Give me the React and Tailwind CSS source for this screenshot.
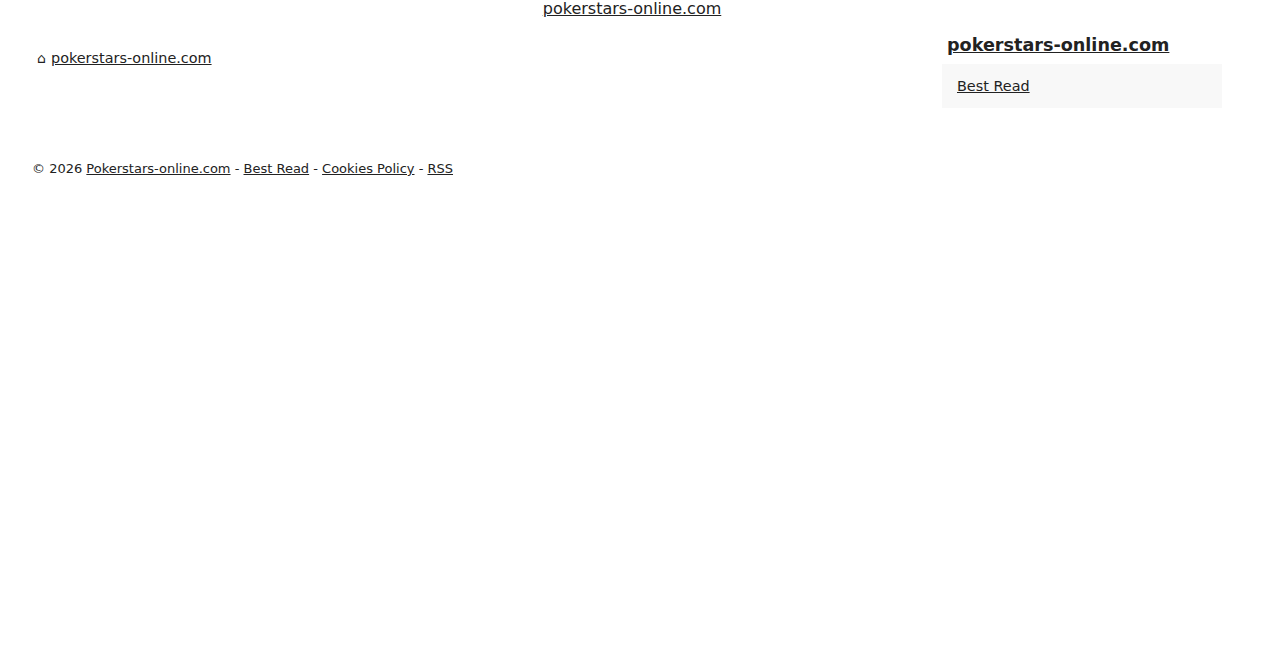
import React from 'react';

const font = { fontFamily: '"DejaVu Sans", Verdana, sans-serif' };

const Link = ({ children, className = '' }) => (
  <a href="#" className={`text-[#222] underline ${className}`}>
    {children}
  </a>
);

export default function App() {
  return (
    <div className="min-h-screen bg-white text-[#222]" style={font}>
      {/* site title */}
      <div className="text-center text-[16px] leading-[17px]">
        <Link>pokerstars-online.com</Link>
      </div>

      <div className="flex pl-[32px] pr-[42px] pt-[14px]">
        {/* main column */}
        <main className="flex-1">
          <nav className="flex items-baseline pl-[5px] pt-[17px] text-[14.4px] leading-[20px]">
            <span className="w-[14px] text-[14px]">⌂</span>
            <Link>pokerstars-online.com</Link>
          </nav>
        </main>

        {/* sidebar */}
        <aside className="w-[280px]">
          <h3 className="px-[5px] pt-[1px] text-[17.6px] font-bold leading-[26px]">
            <Link>pokerstars-online.com</Link>
          </h3>
          <div className="mt-[6px] bg-[#f8f8f8] px-[15px] py-[12px] text-[14.4px] leading-[20px]">
            <Link>Best Read</Link>
          </div>
        </aside>
      </div>

      <footer className="pl-[32px] pt-[52px] text-[13px] leading-[18px]">
        © 2026 <Link>Pokerstars-online.com</Link> - <Link>Best Read</Link> -{' '}
        <Link>Cookies Policy</Link> - <Link>RSS</Link>
      </footer>
    </div>
  );
}
